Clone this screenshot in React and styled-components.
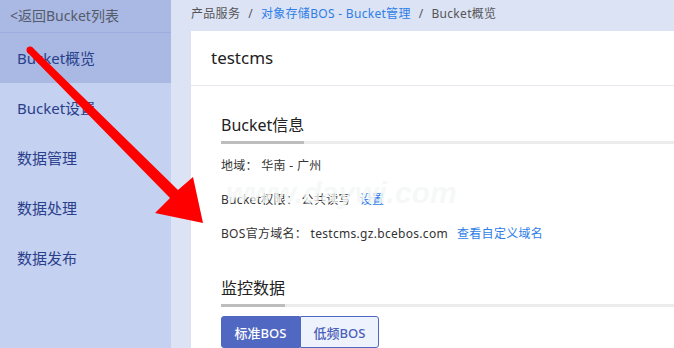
import React from 'react';
import styled, { createGlobalStyle } from 'styled-components';

const Global = createGlobalStyle`
	html, body {
		margin: 0;
		padding: 0;
	}
	body {
		width: 674px;
		height: 348px;
		overflow: hidden;
		font-family: "Noto Sans", "Noto Sans CJK SC", sans-serif;
		color: #333;
	}
`;

const Page = styled.div`
	position: relative;
	display: flex;
	width: 674px;
	height: 348px;
	background: #dce3f5;
	overflow: hidden;
`;

const Sidebar = styled.nav`
	display: flex;
	flex-direction: column;
	width: 171px;
	flex-shrink: 0;
	background: #c5d1f0;
`;

const BackLink = styled.div`
	height: 33px;
	line-height: 31px;
	padding-left: 10px;
	font-size: 14px;
	color: #555b6b;
	background: #a9b9e3;
	border-bottom: 1px solid #9cade0;
	box-sizing: border-box;
`;

const NavItem = styled.div`
	height: 50px;
	line-height: 50px;
	padding-left: 17px;
	font-size: 15px;
	color: #2a3f8c;
	background: ${(p) => (p.$active ? '#a9b9e3' : 'transparent')};
`;

const Main = styled.main`
	display: flex;
	flex-direction: column;
	flex: 1;
	padding-left: 20px;
	min-width: 0;
`;

const Breadcrumb = styled.div`
	display: flex;
	gap: 8px;
	height: 33px;
	line-height: 27px;
	font-size: 12px;
	letter-spacing: 0.3px;
	color: #555;
	white-space: nowrap;
`;

const Crumb = styled.span`
	color: ${(p) => (p.$link ? '#2e7ee6' : '#555')};
`;

const Panel = styled.section`
	flex: 1;
	background: #fff;
`;

const PanelHeader = styled.div`
	height: 55px;
	line-height: 54px;
	padding-left: 20px;
	font-size: 17px;
	color: #222;
	border-bottom: 1px solid #e5e8ee;
	box-sizing: border-box;
`;

const PanelBody = styled.div`
	padding: 0 0 0 30px;
`;

const SectionHead = styled.div`
	display: flex;
	margin-top: ${(p) => p.$top}px;
	border-bottom: 3px solid #ececec;
`;

const SectionTitle = styled.h3`
	margin: 0 0 -3px;
	line-height: 26px;
	padding-bottom: 3px;
	font-size: 16px;
	font-weight: 400;
	color: #222;
	border-bottom: 3px solid #bdbdbd;
`;

const InfoList = styled.div`
	margin-top: 5px;
`;

const InfoRow = styled.div`
	display: flex;
	gap: 9px;
	height: 34px;
	line-height: 34px;
	font-size: 12px;
	letter-spacing: 0.3px;
	color: #333;
	white-space: nowrap;
`;

const Link = styled.a`
	color: #2e7ee6;
	text-decoration: none;
`;

const Tabs = styled.div`
	display: flex;
	margin-top: 9px;
`;

const Tab = styled.button`
	width: 79px;
	height: 32px;
	padding: 0;
	font-family: inherit;
	font-size: 13px;
	font-weight: 500;
	color: ${(p) => (p.$active ? '#fff' : '#4a5fb8')};
	background: ${(p) => (p.$active ? '#5068c2' : '#eef2fc')};
	border: 1px solid #5068c2;
	border-radius: ${(p) => (p.$active ? '3px 0 0 3px' : '0 3px 3px 0')};
`;

const Overlay = styled.svg`
	position: absolute;
	left: 0;
	top: 0;
	pointer-events: none;
`;

const Watermark = styled.div`
	position: absolute;
	left: 226px;
	top: 176px;
	font-family: "Liberation Sans", sans-serif;
	font-size: 30px;
	font-weight: 700;
	font-style: italic;
	color: rgba(243, 247, 246, 0.82);
	pointer-events: none;
`;

const navItems = ['Bucket概览', 'Bucket设置', '数据管理', '数据处理', '数据发布'];

export default function App() {
	return (
		<Page>
			<Global />
			<Sidebar>
				<BackLink>&lt;返回Bucket列表</BackLink>
				{navItems.map((item, i) => (
					<NavItem key={item} $active={i === 0}>
						{item}
					</NavItem>
				))}
			</Sidebar>
			<Main>
				<Breadcrumb>
					<Crumb>产品服务</Crumb>
					<Crumb>/</Crumb>
					<Crumb $link>对象存储BOS - Bucket管理</Crumb>
					<Crumb>/</Crumb>
					<Crumb>Bucket概览</Crumb>
				</Breadcrumb>
				<Panel>
					<PanelHeader>testcms</PanelHeader>
					<PanelBody>
						<SectionHead $top={26}>
							<SectionTitle>Bucket信息</SectionTitle>
						</SectionHead>
						<InfoList>
							<InfoRow>地域： 华南 - 广州</InfoRow>
							<InfoRow>
								<span>Bucket权限： 公共读写</span>
								<Link>设置</Link>
							</InfoRow>
							<InfoRow>
								<span>BOS官方域名： testcms.gz.bcebos.com</span>
								<Link>查看自定义域名</Link>
							</InfoRow>
						</InfoList>
						<SectionHead $top={24}>
							<SectionTitle>监控数据</SectionTitle>
						</SectionHead>
						<Tabs>
							<Tab $active>标准BOS</Tab>
							<Tab>低频BOS</Tab>
						</Tabs>
					</PanelBody>
				</Panel>
			</Main>
			<Watermark>www.daywi.com</Watermark>
			<Overlay width="674" height="348" viewBox="0 0 674 348">
				<circle cx="30" cy="50" r="3.5" fill="#ff0000" />
				<polygon
					points="32.5,47.5 178,190 193,177 203,223 155,213 170,198 27.5,52.5"
					fill="#ff0000"
				/>
			</Overlay>
		</Page>
	);
}
